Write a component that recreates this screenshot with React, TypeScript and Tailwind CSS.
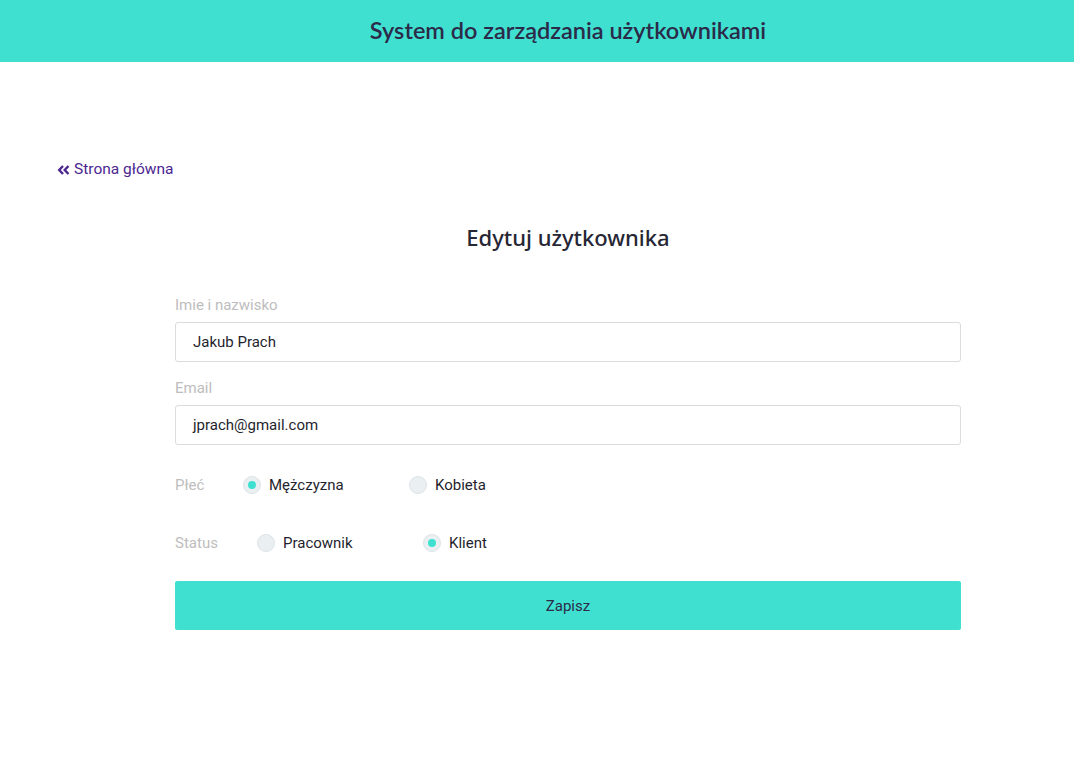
import React from "react";

function Radio({ checked, label }: { checked: boolean; label: string }) {
  return (
    <label className="flex items-center w-[166px]">
      <span className="w-[18px] h-[18px] rounded-full bg-[#eaeff2] border border-[#dde3e7] flex items-center justify-center">
        {checked && <span className="w-[8px] h-[8px] rounded-full bg-[#40e0d0]" />}
      </span>
      <span className="ml-[8px] text-[15px] text-[#1f1f2e]">{label}</span>
    </label>
  );
}

export default function App() {
  return (
    <div className="min-h-[763px] bg-white" style={{ fontFamily: "Roboto, 'Liberation Sans', sans-serif" }}>
      <header className="h-[62px] bg-[#40e0d0] flex items-center justify-center">
        <h1 className="text-[23.5px] text-[#2b2a48] font-semibold pl-[62px]" style={{ fontFamily: "Lato, sans-serif" }}>
          System do zarządzania użytkownikami
        </h1>
      </header>
      <div className="pt-[96px] px-[57px]">
        <a className="flex items-center text-[15.5px] text-[#4b2690] gap-[4px]" href="#">
          <svg width="13" height="12" viewBox="0 0 13 12" fill="none" stroke="#4b2690" strokeWidth="2.4" strokeLinejoin="miter">
            <path d="M6 2 L2.2 6 L6 10" />
            <path d="M11.5 2 L7.7 6 L11.5 10" />
          </svg>
          <span>Strona główna</span>
        </a>
      </div>
      <div className="w-[786px] ml-[175px]">
        <h2 className="text-center text-[22px] font-medium text-[#262634] mt-[40px]" style={{ fontFamily: "'Noto Sans', sans-serif" }}>
          Edytuj użytkownika
        </h2>
        <form className="mt-[41px]">
          <label className="block text-[15px] text-[#bdbdbd] leading-[20px]">Imie i nazwisko</label>
          <div className="mt-[7px] h-[40px] border border-[#dcdcdc] rounded-[3px] flex items-center pl-[17px] text-[15px] text-[#1f1f2e]">
            Jakub Prach
          </div>
          <label className="block text-[15px] text-[#bdbdbd] leading-[20px] mt-[16px]">Email</label>
          <div className="mt-[7px] h-[40px] border border-[#dcdcdc] rounded-[3px] flex items-center pl-[17px] text-[15px] text-[#1f1f2e]">
            jprach@gmail.com
          </div>
          <div className="flex items-center mt-[30px] h-[20px]">
            <span className="text-[15px] text-[#bdbdbd] w-[68px]">Płeć</span>
            <Radio checked label="Mężczyzna" />
            <Radio checked={false} label="Kobieta" />
          </div>
          <div className="flex items-center mt-[38px] h-[20px]">
            <span className="text-[15px] text-[#bdbdbd] w-[82px]">Status</span>
            <Radio checked={false} label="Pracownik" />
            <Radio checked label="Klient" />
          </div>
          <button type="button" className="mt-[28px] w-full h-[49px] bg-[#40e0d0] rounded-[2px] text-[15px] text-[#2b2a48]">
            Zapisz
          </button>
        </form>
      </div>
    </div>
  );
}
